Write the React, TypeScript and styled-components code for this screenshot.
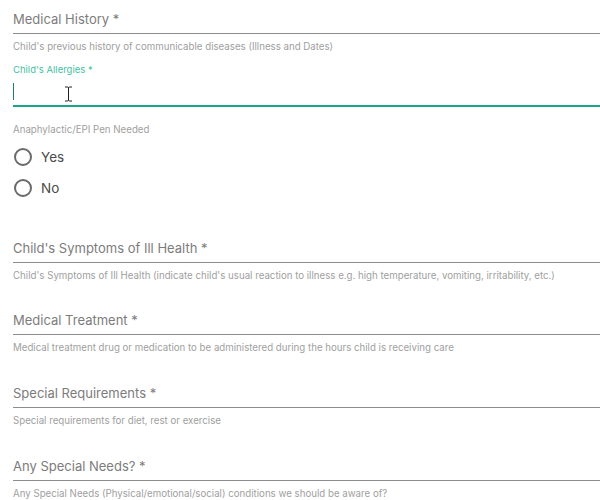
import styled, { createGlobalStyle } from 'styled-components';

const GlobalStyle = createGlobalStyle`
  html, body {
    margin: 0;
    padding: 0;
    background: #ffffff;
  }
  body {
    font-family: Inter, "Noto Sans", sans-serif;
  }
`;

const fields = [
  {
    label: "Child's Symptoms of Ill Health *",
    helper:
      "Child's Symptoms of Ill Health (indicate child's usual reaction to illness e.g. high temperature, vomiting, irritability, etc.)",
    gap: 29,
  },
  {
    label: 'Medical Treatment *',
    helper: 'Medical treatment drug or medication to be administered during the hours child is receiving care',
    gap: 19,
  },
  {
    label: 'Special Requirements *',
    helper: 'Special requirements for diet, rest or exercise',
    gap: 20,
  },
  {
    label: 'Any Special Needs? *',
    helper: 'Any Special Needs (Physical/emotional/social) conditions we should be aware of?',
    gap: 20,
  },
];

interface FieldProps {
  label: string;
  helper: string;
  $gap?: number;
}

const TextField = ({ label, helper, $gap = 0 }: FieldProps) => (
  <Field $gap={$gap}>
    <InputBox>
      <Placeholder>{label}</Placeholder>
    </InputBox>
    <Helper>{helper}</Helper>
  </Field>
);

const App = () => {
  return (
    <>
      <GlobalStyle />
      <Page>
        <TextField
          label="Medical History *"
          helper="Child's previous history of communicable diseases (Illness and Dates)"
        />
        <Field $gap={11}>
          <FocusLabel>Child's Allergies *</FocusLabel>
          <FocusBox>
            <Caret />
            <IBeam width="9" height="16" viewBox="0 0 9 16">
              <path d="M1 1h2.5c.6 0 1 .4 1 1v12c0 .6-.4 1-1 1H1M8 1H5.5c-.6 0-1 .4-1 1v12c0 .6.4 1 1 1H8" fill="none" stroke="#222" strokeWidth="1" />
            </IBeam>
          </FocusBox>
        </Field>
        <RadioGroup>
          <GroupLabel>Anaphylactic/EPI Pen Needed</GroupLabel>
          <RadioRow $gap={9}>
            <RadioCircle />
            <RadioText>Yes</RadioText>
          </RadioRow>
          <RadioRow $gap={7}>
            <RadioCircle />
            <RadioText>No</RadioText>
          </RadioRow>
        </RadioGroup>
        {fields.map((f) => (
          <TextField key={f.label} label={f.label} helper={f.helper} $gap={f.gap} />
        ))}
      </Page>
    </>
  );
};
export default App;

const Page = styled.div`
  display: flex;
  flex-direction: column;
  padding-left: 13px;
  width: 587px;
`;

const Field = styled.div<{ $gap: number }>`
  display: flex;
  flex-direction: column;
  margin-top: ${({ $gap }) => $gap}px;
`;

const InputBox = styled.div`
  height: 33px;
  border-bottom: 1px solid #8c8c8c;
  box-sizing: content-box;
`;

const Placeholder = styled.div`
  padding-top: 10px;
  font-size: 13px;
  line-height: 18px;
  font-weight: 400;
  color: #7c7c7c;
`;

const Helper = styled.div`
  margin-top: 7px;
  font-size: 9.7px;
  line-height: 12px;
  font-weight: 400;
  color: #a0a0a0;
  white-space: nowrap;
`;

const FocusLabel = styled.div`
  font-size: 9.5px;
  line-height: 12px;
  font-weight: 400;
  color: #45bfa2;
`;

const FocusBox = styled.div`
  position: relative;
  height: 29px;
  border-bottom: 2px solid #17a88a;
`;

const Caret = styled.div`
  position: absolute;
  left: 0;
  top: 7px;
  width: 1px;
  height: 17px;
  background: #1b7f6a;
`;

const IBeam = styled.svg`
  position: absolute;
  left: 51px;
  top: 10px;
`;

const RadioGroup = styled.div`
  display: flex;
  flex-direction: column;
  margin-top: 17px;
`;

const GroupLabel = styled.div`
  font-size: 9.7px;
  line-height: 12px;
  font-weight: 400;
  color: #a0a0a0;
`;

const RadioRow = styled.div<{ $gap: number }>`
  display: flex;
  align-items: center;
  gap: 9px;
  height: 24px;
  margin-top: ${({ $gap }) => $gap}px;
`;

const RadioCircle = styled.span`
  width: 14px;
  height: 14px;
  border: 2px solid #6a6a6a;
  border-radius: 50%;
  margin-left: 1px;
`;

const RadioText = styled.span`
  font-size: 13.5px;
  line-height: 18px;
  font-weight: 400;
  color: #4a4a4a;
`;
